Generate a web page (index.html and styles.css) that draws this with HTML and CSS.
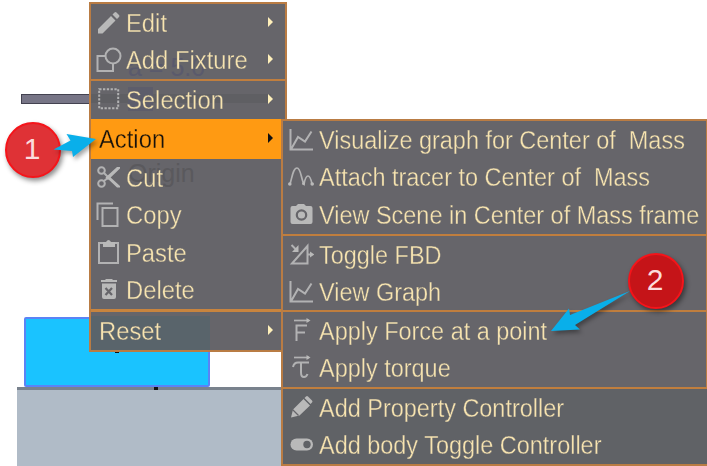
FILE: index.html
```html
<!DOCTYPE html>
<html lang="en">
<head>
<meta charset="utf-8">
<title>Physics scene</title>
<link rel="stylesheet" href="styles.css">
</head>
<body>
<svg width="0" height="0" class="defs" aria-hidden="true">
  <defs>
    <symbol id="graph" viewBox="0 0 26 26"><path class="line" d="M2.500 2v20.500H25M3.500 21.500 10 10l7 4.500L23.500 4.500"/></symbol>
  </defs>
</svg>
<main class="scene">
  <div class="bar"></div>
  <div class="ground"></div>
  <div class="block"></div>
  <div class="dot dot-block"></div>
  <div class="dot dot-ground"></div>

  <nav class="menu main-menu">
    <section class="group g-edit">
      <div class="item"><svg class="icon" viewBox="0 0 26 26"><path class="fill" d="M2 23.500v-4.500L15 6l4.500 4.500L6.500 23.500zM16.500 4.500l2-2q1-1 2 0l2.500 2.500q1 1 0 2l-2 2z"/></svg><span class="label">Edit</span><i class="caret"></i></div>
      <div class="item"><svg class="icon" viewBox="0 0 26 26"><path class="line" d="M9 9H1.500v15H17v-7"/><circle class="line" cx="17" cy="9" r="7.500"/></svg><span class="label">Add Fixture</span><i class="caret"></i><span class="ghost ghost-value">a = 5.0</span></div>
    </section>
    <section class="group g-select">
      <div class="item"><span class="ghost-bar"></span><span class="ghost-box"></span><svg class="icon" viewBox="0 0 26 26"><rect class="line dashed" x="3.200" y="2.200" width="19" height="19"/></svg><span class="label">Selection</span><i class="caret"></i></div>
    </section>
    <div class="item plain active"><span class="label">Action</span><i class="caret"></i></div>
    <section class="group g-clip">
      <div class="item"><svg class="icon" viewBox="0 0 26 26"><g class="line"><circle cx="5.500" cy="5.500" r="3.300"/><circle cx="5.500" cy="18.500" r="3.300"/><path d="M8 8l5 5M8 16l5-4"/></g><path class="fill" d="M21 2h3v1.500L12 15l-2.500-2.500zM13 11l11 10v1.500h-3L11 13z"/></svg><span class="label">Cut</span><span class="ghost ghost-origin">Origin</span></div>
      <div class="item"><svg class="icon" viewBox="0 0 26 26"><path class="line" d="M1.500 18V1.500h15.500M6.500 6h15v18h-15z"/></svg><span class="label">Copy</span></div>
      <div class="item"><svg class="icon" viewBox="0 0 26 26"><path class="line" d="M3 3h19v20H3z"/><path class="fill" d="M7 2h3q2.500-4 5 0h4v5H7z"/></svg><span class="label">Paste</span></div>
      <div class="item"><svg class="icon" viewBox="0 0 26 26"><path class="fill" d="M5 3h4l1-1h6l1 1h4v2H5zM6 6.500h14v13.500q0 2-2 2H8q-2 0-2-2z"/><path class="cut" d="m9.500 11 6.500 7m0-7-6.500 7"/></svg><span class="label">Delete</span></div>
    </section>
    <div class="item plain reset"><span class="ghost-block"></span><span class="label">Reset</span><i class="caret"></i></div>
  </nav>

  <nav class="menu sub-menu">
    <section class="group s-view">
      <div class="item"><svg class="icon"><use href="#graph"/></svg><span class="label">Visualize graph for Center of&nbsp; Mass</span></div>
      <div class="item"><svg class="icon" viewBox="0 0 26 26"><path class="line thin" d="M2 20C4 14 5 4 9 4s4 11 7 16c1-5 2-8 4-8s3 3 4 8"/><circle class="fill" cx="1.800" cy="20" r="1.800"/><circle class="fill" cx="15.500" cy="19.500" r="1.500"/><circle class="fill" cx="24.200" cy="20" r="1.800"/></svg><span class="label">Attach tracer to Center of&nbsp; Mass</span></div>
      <div class="item"><svg class="icon" viewBox="0 0 26 26"><path class="fill" d="M4.500 4H8l2-2h6l2 2h4.500q2 0 2 2v14q0 2-2 2h-18q-2 0-2-2V6q0-2 2-2z"/><circle class="cut" cx="13.500" cy="13" r="4.700"/></svg><span class="label">View Scene in Center of Mass frame</span></div>
    </section>
    <section class="group s-fbd">
      <div class="item"><svg class="icon" viewBox="0 0 26 26"><path class="line" d="M4 21.500 19.500 4v17.500zM3.500 3l5 5M19 12.500h5"/><path class="fill" d="M10.500 3v7H4zM22 9.500l4.500 3-4.500 3z"/></svg><span class="label">Toggle FBD</span></div>
      <div class="item"><svg class="icon"><use href="#graph"/></svg><span class="label">View Graph</span></div>
    </section>
    <section class="group s-force">
      <div class="item"><svg class="icon" viewBox="0 0 26 26"><path class="line" d="M8.500 23V7.500H19M8.500 14.500H17"/><path class="line thin" d="M6 2.500h15"/><path class="fill" d="m18.500 0 4 2.500-4 2.500z"/></svg><span class="label">Apply Force at a point</span></div>
      <div class="item"><svg class="icon" viewBox="0 0 26 26"><path class="line" d="M5 12q1-4.500 5-4.500h11M13 8v9.500q0 4.500 3 4.500 2.500 0 3.500-3"/><path class="line thin" d="M6 2.500h15"/><path class="fill" d="m18.500 0 4 2.500-4 2.500z"/></svg><span class="label">Apply torque</span></div>
    </section>
    <section class="group s-control">
      <div class="item"><svg class="icon" viewBox="0 0 26 26"><path class="fill" d="m3 22.500 2-8L15.500 4l6.500 6.500L11.500 20.500zM16.500 3l1.500-1.500q1-1 2 0l4 4q1 1 0 2L22.500 9z"/><path class="cut thin" d="m4.500 14.500 6 6"/></svg><span class="label">Add Property Controller</span></div>
      <div class="item"><svg class="icon" viewBox="0 0 26 26"><rect class="fill" x="2.500" y="6.500" width="22.500" height="12" rx="6"/><circle class="hole" cx="19" cy="12.500" r="3.700"/></svg><span class="label">Add body Toggle Controller</span></div>
    </section>
  </nav>

  <div class="badge one"><span>1</span></div>
  <div class="badge two"><span>2</span></div>
  <svg class="arrows" viewBox="0 0 707 466">
    <path d="m96 139-29.500-5 4 6.500-17 9 18.500 1.500 1 6z"/>
    <path d="m551 331 18-22.500 1 6.500 60-24-55 34 5 4.500z"/>
  </svg>
</main>
</body>
</html>
```

FILE: styles.css
```css
* { box-sizing: border-box; }
body { margin: 0; background: #fff; font-family: "Liberation Sans", Arial, sans-serif; }
.defs { position: absolute; }
.scene { position: relative; width: 707px; height: 466px; overflow: hidden; }

/* objects on the simulation canvas */
.bar { position: absolute; left: 21px; top: 94px; width: 72px; height: 10px; background: #777586; border: solid #434250; border-width: 1px 0 1px 1px; }
.ground { position: absolute; left: 17px; top: 387px; width: 270px; height: 79px; background: #b0bbc7; border-top: 3px solid #79828d; }
.block { position: absolute; left: 24px; top: 317px; width: 186px; height: 70px; background: #1ac3ff; border: 2px solid #5b83f5; border-radius: 2px; }
.dot { position: absolute; width: 4px; height: 3px; background: #111; }
.dot-block { left: 115px; top: 350px; }
.dot-ground { left: 154px; top: 387px; }

/* menus */
.menu { position: absolute; background: #66656a; border: 2px solid #b97c44; color: #f7e4b0; }
.main-menu { left: 89px; top: 2px; width: 198px; height: 350px; display: grid; grid-template-rows: 77px 38px 40px 153px 38px; }
.sub-menu { left: 281px; top: 119px; width: 427px; height: 347px; display: grid; grid-template-rows: 115px 76px 77px 75px; }
.group { display: grid; grid-auto-rows: 1fr; }
.g-edit, .s-view, .s-fbd, .s-force { border-bottom: 2px solid #c07e3e; }
.g-clip { border-bottom: 3px solid #c8843e; }
.s-control { background: #606266; }
.item { position: relative; display: flex; align-items: center; padding-left: 5px; min-height: 0; }
.plain { padding-left: 8px; }
.active { background: #ff9a12; color: #17120c; }
.icon { position: relative; width: 26px; height: 26px; flex: none; margin-right: 4px; }
.fill { fill: #b9b9b9; }
.line { fill: none; stroke: #b2b2b3; stroke-width: 2; }
.line.thin { stroke-width: 1.700; }
.dashed { stroke-dasharray: 2.300 1.500; }
.cut { fill: none; stroke: #66656a; stroke-width: 2.200; }
.cut.thin { stroke-width: 1.300; }
.hole { fill: #606266; }
.label { position: relative; z-index: 1; font-size: 26px; line-height: 30px; white-space: nowrap; transform: scaleX(.915); transform-origin: left center; -webkit-text-stroke: .35px #66656a; }
.active .label { -webkit-text-stroke-color: #ff9a12; }
.sub-menu .label { left: 1px; transform: scaleX(.902); }
.caret { position: absolute; right: 12px; top: 50%; margin-top: -6px; border-left: 5px solid #fff0ba; border-top: 5px solid transparent; border-bottom: 5px solid transparent; }
.active .caret { border-left-color: #111; }

/* canvas objects faintly visible through the menu */
.ghost { position: absolute; font-size: 25px; line-height: 28px; white-space: nowrap; }
.ghost-value { left: 37px; top: 11px; color: #5a5a6c; }
.ghost-origin { left: 37px; top: 0; color: #5a595d; }
.ghost-bar { position: absolute; left: 0; top: 13px; width: 180px; height: 9px; background: #5f5f63; }
.ghost-box { position: absolute; left: 37px; top: 6px; width: 25px; height: 24px; background: #5d5d6b; }
.ghost-block { position: absolute; left: 0; top: 4px; bottom: 0; width: 119px; background: #59646b; }

/* callouts */
.arrows { position: absolute; inset: 0; width: 707px; height: 466px; fill: #09afea; filter: drop-shadow(2px 3px 2px rgb(0 0 0 / .35)); }
.badge { position: absolute; width: 56px; height: 56px; border-radius: 50%; border: 2px solid #f5141a; color: #fbdcdc; font-size: 30px; display: flex; align-items: center; justify-content: center; box-shadow: 2px 3px 5px rgb(0 0 0 / .45); }
.one { left: 5px; top: 122px; background: #df3236; }
.two { left: 628px; top: 253px; background: #c51418; }
.badge span { margin: -3px 2px 0 0; }
```
